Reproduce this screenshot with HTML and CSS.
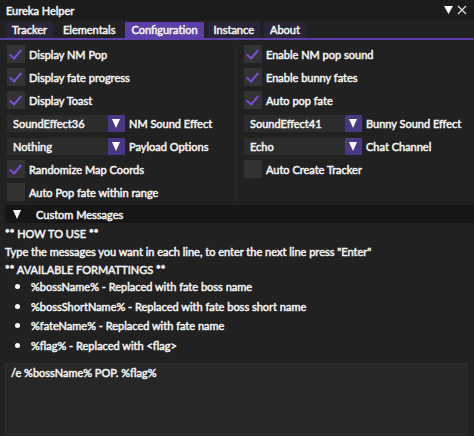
FILE: index.html
```html
<!DOCTYPE html>
<html lang="en">
<head>
<meta charset="UTF-8" />
<meta name="viewport" content="width=device-width, initial-scale=1.0"/>
<title>Eureka Helper</title>
<link rel="stylesheet" href="styles.css">
</head>
<body>
<div class="window">
  <div class="titlebar">
    <span class="title">Eureka Helper</span>
    <span class="controls">
      <svg width="9" height="8" viewBox="0 0 9 8"><polygon points="0,0 9,0 4.5,8" fill="#fff"/></svg>
      <svg width="10" height="10" viewBox="0 0 10 10"><path d="M1 1 L9 9 M9 1 L1 9" stroke="#ddd" stroke-width="1.3"/></svg>
    </span>
  </div>

  <div class="tabs">
    <div class="tab tab-dim">Tracker</div>
    <div class="tab">Elementals</div>
    <div class="tab tab-active">Configuration</div>
    <div class="tab tab-dim">Instance</div>
    <div class="tab tab-dim">About</div>
  </div>

  <div class="config">
    <div class="col">
      <div class="row"><span class="check on"></span>Display NM Pop</div>
      <div class="row"><span class="check on"></span>Display fate progress</div>
      <div class="row"><span class="check on"></span>Display Toast</div>
      <div class="row"><span class="combo"><span class="combo-value">SoundEffect36</span><span class="combo-arrow"></span></span>NM Sound Effect</div>
      <div class="row"><span class="combo"><span class="combo-value">Nothing</span><span class="combo-arrow"></span></span>Payload Options</div>
      <div class="row"><span class="check on"></span>Randomize Map Coords</div>
      <div class="row"><span class="check"></span>Auto Pop fate within range</div>
    </div>
    <div class="col col-right">
      <div class="row"><span class="check on"></span>Enable NM pop sound</div>
      <div class="row"><span class="check on"></span>Enable bunny fates</div>
      <div class="row"><span class="check on"></span>Auto pop fate</div>
      <div class="row"><span class="combo"><span class="combo-value">SoundEffect41</span><span class="combo-arrow"></span></span>Bunny Sound Effect</div>
      <div class="row"><span class="combo"><span class="combo-value">Echo</span><span class="combo-arrow"></span></span>Chat Channel</div>
      <div class="row"><span class="check"></span>Auto Create Tracker</div>
      <div class="row"></div>
    </div>
  </div>

  <div class="header">
    <span class="arrow"></span>Custom Messages
  </div>

  <div class="messages">
    <div class="line">** HOW TO USE **</div>
    <div class="line">Type the messages you want in each line, to enter the next line press "Enter"</div>
    <div class="line">** AVAILABLE FORMATTINGS **</div>
    <ul class="formats">
      <li>%bossName% - Replaced with fate boss name</li>
      <li>%bossShortName% - Replaced with fate boss short name</li>
      <li>%fateName% - Replaced with fate name</li>
      <li>%flag% - Replaced with &lt;flag&gt;</li>
    </ul>
  </div>

  <div class="textbox">/e %bossName% POP. %flag%</div>
</div>
</body>
</html>
```

FILE: styles.css
```css
body {
  margin: 0;
  padding: 0;
  background: #202020;
  font-family: Lato, sans-serif;
  font-size: 11px;
  color: #f4f4f4;
  -webkit-text-stroke: 0.5px #f4f4f4;
}

.window {
  width: 474px;
  height: 436px;
  overflow: hidden;
  background: #212121;
}

.titlebar {
  height: 20px;
  display: flex;
  align-items: center;
  justify-content: space-between;
  padding: 0 7px 0 6px;
  background: #1c1c1c;
}

.controls {
  display: flex;
  align-items: center;
  gap: 4px;
}

.tabs {
  display: flex;
  gap: 4px;
  padding: 2px 6px 0;
  height: 16px;
  border-bottom: 2px solid #5b3ea8;
}

.tab {
  padding: 0 6px;
  line-height: 16px;
}

.tab-dim {
  background: #2a2438;
}

.tab-active {
  background: #5b3ea8;
}

.config {
  display: grid;
  grid-template-columns: 236px 238px;
  padding-top: 5px;
}

.col {
  padding-left: 7px;
  display: flex;
  flex-direction: column;
  gap: 5px;
}

.col-right {
  border-left: 1px solid #2b2b2b;
  padding-left: 7px;
}

.row {
  height: 18px;
  display: flex;
  align-items: center;
  gap: 4px;
  white-space: nowrap;
}

.check {
  width: 18px;
  height: 18px;
  background: #333333;
  position: relative;
}

.check.on::after {
  content: "";
  position: absolute;
  left: 5px;
  top: 2px;
  width: 5px;
  height: 10px;
  border-right: 2px solid #7a4fd6;
  border-bottom: 2px solid #7a4fd6;
  transform: rotate(40deg);
}

.combo {
  width: 118px;
  height: 17px;
  display: flex;
  background: #2c2c2c;
}

.combo-value {
  flex: 1;
  padding-left: 6px;
  line-height: 17px;
}

.combo-arrow {
  width: 17px;
  background: #4a3887;
  position: relative;
}

.combo-arrow::after {
  content: "";
  position: absolute;
  left: 4px;
  top: 4px;
  border-left: 4.5px solid transparent;
  border-right: 4.5px solid transparent;
  border-top: 9px solid #fff;
}

.header {
  margin: 4px 0 0 5px;
  height: 18px;
  display: flex;
  align-items: center;
  background: #161616;
}

.arrow {
  width: 0;
  height: 0;
  margin: 0 15px 0 8px;
  border-left: 4.5px solid transparent;
  border-right: 4.5px solid transparent;
  border-top: 9px solid #fff;
}

.messages {
  padding: 2px 5px 0;
}

.line {
  height: 18px;
  line-height: 18px;
}

.formats {
  margin: -2px 0 0;
  padding: 0 0 0 10px;
  list-style: none;
}

.formats li {
  height: 19.5px;
  line-height: 19.5px;
  display: flex;
  align-items: center;
}

.formats li::before {
  content: "";
  width: 5px;
  height: 5px;
  border-radius: 50%;
  background: #fff;
  margin-right: 11px;
}

.textbox {
  margin: 8px 6px 0 5px;
  height: 66px;
  padding: 2px 5px;
  background: #272727;
  border: 1px solid #2d2d2d;
}
```
